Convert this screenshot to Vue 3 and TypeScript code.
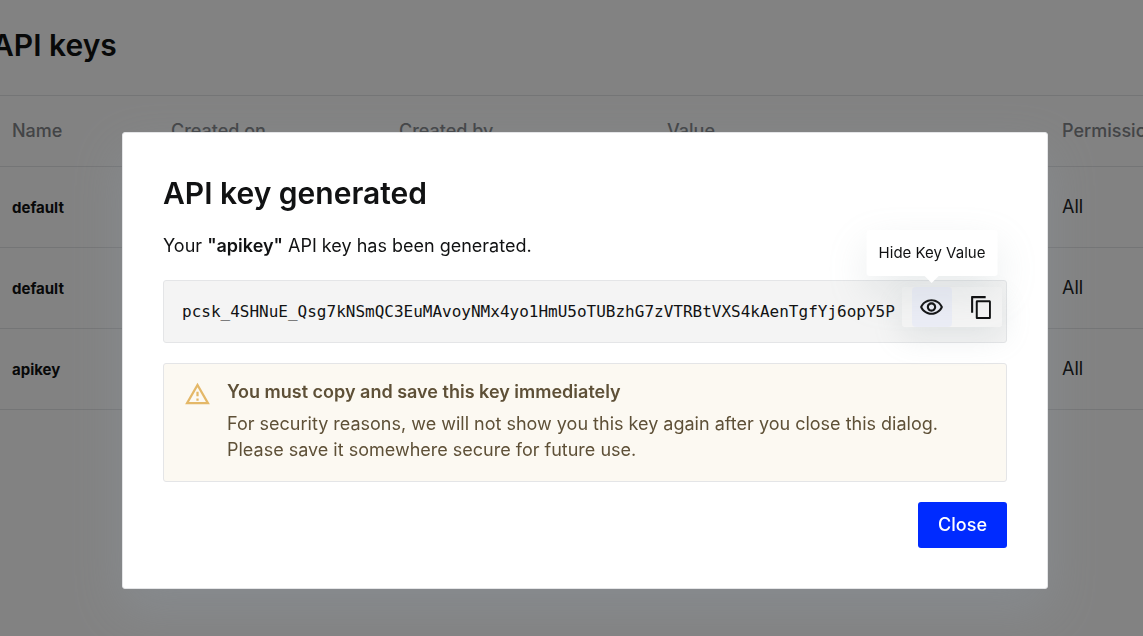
<script setup lang="ts">
import { ref } from 'vue'

interface ApiKey {
  id: number
  name: string
  permissions: string
}

const keys: ApiKey[] = [
  { id: 1, name: 'default', permissions: 'All' },
  { id: 2, name: 'default', permissions: 'All' },
  { id: 3, name: 'apikey', permissions: 'All' },
]

const keyValue = 'pcsk_4SHNuE_Qsg7kNSmQC3EuMAvoyNMx4yo1HmU5oTUBzhG7zVTRBtVXS4kAenTgfYj6opY5P'
const open = ref(true)
const visible = ref(true)

function copyKey(): void {
  void navigator.clipboard?.writeText(keyValue)
}
</script>

<template>
  <div class="page">
    <header class="page-head">
      <h1>API keys</h1>
    </header>
    <table class="keys">
      <colgroup>
        <col class="c-name" />
        <col class="c-created" />
        <col class="c-author" />
        <col class="c-value" />
        <col />
      </colgroup>
      <thead>
        <tr>
          <th scope="col">Name</th>
          <th scope="col">Created on</th>
          <th scope="col">Created by</th>
          <th scope="col">Value</th>
          <th scope="col">Permissions</th>
        </tr>
      </thead>
      <tbody>
        <tr v-for="k in keys" :key="k.id">
          <td class="name">{{ k.name }}</td>
          <td></td>
          <td></td>
          <td></td>
          <td>{{ k.permissions }}</td>
        </tr>
      </tbody>
    </table>

    <div v-if="open" class="backdrop">
      <section class="dialog" role="dialog" aria-modal="true" aria-labelledby="dialog-title">
        <h2 id="dialog-title">API key generated</h2>
        <p class="lead">Your <strong>"apikey"</strong> API key has been generated.</p>

        <div class="key-box">
          <code>{{ visible ? keyValue : '•'.repeat(keyValue.length) }}</code>
          <div class="actions">
            <button
              type="button"
              class="icon-btn active"
              aria-describedby="key-tip"
              aria-label="Hide Key Value"
              @click="visible = !visible"
            >
              <svg viewBox="0 0 24 24" aria-hidden="true">
                <path
                  d="M12 6c3.79 0 7.17 2.13 8.82 5.5C19.17 14.87 15.79 17 12 17s-7.17-2.13-8.82-5.5C4.83 8.13 8.21 6 12 6m0-2C7 4 2.73 7.11 1 11.5 2.73 15.89 7 19 12 19s9.27-3.11 11-7.5C21.27 7.11 17 4 12 4zm0 5c1.38 0 2.5 1.12 2.5 2.5S13.38 14 12 14s-2.5-1.12-2.5-2.5S10.62 9 12 9m0-2c-2.48 0-4.5 2.02-4.5 4.5S9.52 16 12 16s4.5-2.02 4.5-4.5S14.48 7 12 7z"
                />
              </svg>
              <span id="key-tip" class="tooltip" role="tooltip">Hide Key Value</span>
            </button>
            <button type="button" class="icon-btn" aria-label="Copy key" @click="copyKey">
              <svg viewBox="0 0 24 24" aria-hidden="true">
                <path
                  d="M16 1H3c-.6 0-1 .4-1 1v15h2V3h12V1zm3.500 4H8c-1.100 0-1.500.6-1.500 1.500v15c0 .9.5 1.500 1.500 1.500h11.500c1 0 1.500-.6 1.500-1.500v-15c0-.9-.5-1.500-1.500-1.500zM19.200 21H8.400V7h10.800v14z"
                />
              </svg>
            </button>
          </div>
        </div>

        <div class="alert" role="alert">
          <svg class="warn" viewBox="0 0 24 24" aria-hidden="true">
            <path
              d="M12 5.99 19.53 19H4.47L12 5.99M12 2 1 21h22L12 2zm1 14h-2v2h2v-2zm0-6h-2v4h2v-4z"
            />
          </svg>
          <div class="alert-text">
            <strong>You must copy and save this key immediately</strong>
            <p>
              For security reasons, we will not show you this key again after you close this
              dialog. Please save it somewhere secure for future use.
            </p>
          </div>
        </div>

        <footer>
          <button type="button" class="close" @click="open = false">Close</button>
        </footer>
      </section>
    </div>
  </div>
</template>

<style>
body {
  margin: 0;
  background: #ffffff;
}
</style>

<style scoped>
.page {
  min-height: 100vh;
  overflow: hidden;
  font-family: Inter, 'Liberation Sans', sans-serif;
  font-size: 18px;
  color: #111213;
}

.page-head {
  padding: 24px 0 28px;
  border-bottom: 1px solid #e4e5e7;
}

h1,
h2 {
  margin: 0;
  font-size: 30px;
  line-height: 43px;
  font-weight: 600;
}

h1 {
  margin-left: -8px;
}

.keys {
  width: 100%;
  table-layout: fixed;
  border-collapse: separate;
  border-spacing: 0;
}

.c-name {
  width: 159px;
}

.c-created {
  width: 228px;
}

.c-author {
  width: 268px;
}

.c-value {
  width: 395px;
}

.keys th,
.keys td {
  box-sizing: border-box;
  height: 81px;
  padding: 0 0 2px 12px;
  border-bottom: 1px solid #e4e5e7;
  text-align: left;
  white-space: nowrap;
}

.keys th {
  height: 71px;
  font-weight: 500;
  color: #83868a;
}

.keys td.name {
  padding-bottom: 0;
  font-size: 15px;
  font-weight: 700;
}

.backdrop {
  position: fixed;
  inset: 0;
  box-sizing: border-box;
  padding: 132px 95px 0 122px;
  background: rgba(0, 0, 0, 0.49);
}

.dialog {
  padding: 40px;
  border: 1px solid #e4e5e7;
  border-radius: 3px;
  background: #ffffff;
  box-shadow: 0 20px 50px rgba(145, 158, 171, 0.3);
}

.dialog h2 {
  line-height: 40px;
}

.lead {
  margin: 20px 0 22px;
  line-height: 25px;
}

.lead strong {
  font-weight: 600;
}

.key-box {
  position: relative;
  padding: 18px;
  border: 1px solid #e4e5e7;
  border-radius: 3px;
  background: #f4f4f4;
}

.key-box code {
  display: block;
  font: 16px/25px 'DejaVu Sans Mono', 'Liberation Mono', monospace;
  white-space: nowrap;
}

.actions {
  position: absolute;
  top: 6px;
  right: 4px;
  display: flex;
  gap: 10px;
  padding-left: 10px;
  border-radius: 3px;
  background: #f4f4f4;
  box-shadow: 0 10px 30px rgba(145, 158, 165, 0.2);
}

.icon-btn {
  position: relative;
  display: flex;
  align-items: center;
  width: 40px;
  height: 40px;
  padding: 0 7px;
  border: 0;
  border-radius: 4px;
  background: transparent;
  color: #111213;
}

.icon-btn.active {
  background: #ebedf6;
}

.icon-btn svg {
  flex: none;
  width: 25px;
  height: 25px;
  fill: currentColor;
}

.tooltip {
  position: absolute;
  bottom: 51px;
  left: 50%;
  transform: translateX(-50%);
  padding: 12px;
  border-radius: 3px;
  background: #ffffff;
  box-shadow: 0 16px 40px rgba(145, 158, 165, 0.2);
  font: 15px/22px Inter, 'Liberation Sans', sans-serif;
  white-space: nowrap;
}

.tooltip::after {
  content: '';
  position: absolute;
  top: 100%;
  left: 50%;
  margin-left: -7px;
  border: 7px solid transparent;
  border-bottom-width: 0;
  border-top-color: #ffffff;
}

.alert {
  display: flex;
  gap: 16px;
  margin: 20px 0;
  padding: 15px 20px 18px;
  border: 1px solid #e4e5e7;
  border-radius: 3px;
  background: #fcf9f2;
  color: #5e5037;
}

.warn {
  flex: none;
  width: 27px;
  height: 30px;
  fill: #e4b868;
}

.alert strong {
  display: block;
  line-height: 26px;
  font-weight: 600;
}

.alert p {
  max-width: 740px;
  margin: 6px 0 0;
  line-height: 26px;
}

footer {
  display: flex;
  justify-content: flex-end;
}

.close {
  padding: 11px 20px;
  border: 0;
  border-radius: 3px;
  background: #002bff;
  color: #ffffff;
  font: 500 18px/24px Inter, 'Liberation Sans', sans-serif;
}
</style>
